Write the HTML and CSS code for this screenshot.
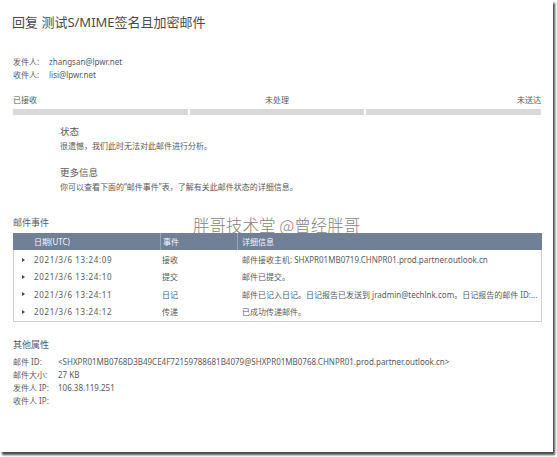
FILE: index.html
```html
<!DOCTYPE html>
<html lang="zh-CN">
<head>
<meta charset="utf-8">
<link rel="stylesheet" href="styles.css">
</head>
<body>
<div class="frame">
  <h1 class="title">回复 测试S/MIME签名且加密邮件</h1>

  <div class="people">
    <div class="prow"><span class="plabel">发件人:</span><span>zhangsan@lpwr.net</span></div>
    <div class="prow"><span class="plabel">收件人:</span><span>lisi@lpwr.net</span></div>
  </div>

  <div class="progress">
    <div class="plabels">
      <span class="pl-left">已接收</span><span class="pl-mid">未处理</span><span class="pl-right">未送达</span>
    </div>
    <div class="bars">
      <div class="bar"></div><div class="bar"></div><div class="bar"></div>
    </div>
  </div>

  <div class="info">
    <div class="iblock">
      <div class="ihead">状态</div>
      <div class="itext">很遗憾，我们此时无法对此邮件进行分析。</div>
    </div>
    <div class="iblock">
      <div class="ihead">更多信息</div>
      <div class="itext">你可以查看下面的“邮件事件”表，了解有关此邮件状态的详细信息。</div>
    </div>
  </div>

  <div class="events">
    <div class="shead">邮件事件</div>
    <div class="watermark">胖哥技术堂 @曾经胖哥</div>
    <div class="table">
      <div class="thead">
        <div class="c1">日期(UTC)</div>
        <div class="c2">事件</div>
        <div class="c3">详细信息</div>
      </div>
      <div class="tbody">
        <div class="trow">
          <div class="c1"><span class="tri"></span><span class="date">2021/3/6 13:24:09</span></div>
          <div class="c2">接收</div>
          <div class="c3">邮件接收主机: SHXPR01MB0719.CHNPR01.prod.partner.outlook.cn</div>
        </div>
        <div class="trow">
          <div class="c1"><span class="tri"></span><span class="date">2021/3/6 13:24:10</span></div>
          <div class="c2">提交</div>
          <div class="c3">邮件已提交。</div>
        </div>
        <div class="trow">
          <div class="c1"><span class="tri"></span><span class="date">2021/3/6 13:24:11</span></div>
          <div class="c2">日记</div>
          <div class="c3">邮件已记入日记。日记报告已发送到 jradmin@techlnk.com。日记报告的邮件 ID:...</div>
        </div>
        <div class="trow">
          <div class="c1"><span class="tri"></span><span class="date">2021/3/6 13:24:12</span></div>
          <div class="c2">传递</div>
          <div class="c3">已成功传递邮件。</div>
        </div>
      </div>
    </div>
  </div>

  <div class="props">
    <div class="shead">其他属性</div>
    <div class="prop"><span class="klabel">邮件 ID:</span><span>&lt;SHXPR01MB0768D3B49CE4F72159788681B4079@SHXPR01MB0768.CHNPR01.prod.partner.outlook.cn&gt;</span></div>
    <div class="prop"><span class="klabel">邮件大小:</span><span>27 KB</span></div>
    <div class="prop"><span class="klabel">发件人 IP:</span><span>106.38.119.251</span></div>
    <div class="prop"><span class="klabel">收件人 IP:</span><span></span></div>
  </div>
</div>
</body>
</html>
```

FILE: styles.css
```css
html, body {
  margin: 0;
  padding: 0;
  background: #ffffff;
}
body {
  width: 557px;
  height: 457px;
  overflow: hidden;
  font-family: "Noto Sans", "Noto Sans CJK SC", sans-serif;
  color: #5a5a5a;
}
.frame {
  width: 553px;
  height: 452px;
  background: #fff;
  box-shadow: 2px 3px 2px rgba(0,0,0,0.7);
  box-sizing: border-box;
  padding: 0 12px 0 13px;
}
.title {
  margin: 0 0 0 -1px;
  padding-top: 12px;
  font-size: 13px;
  font-weight: normal;
  line-height: 20px;
  color: #4a4a4a;
}
.people {
  margin-top: 23px;
  font-size: 8px;
  line-height: 13px;
}
.prow { display: flex; }
.plabel { width: 36px; flex: none; }
.progress {
  margin-top: 12px;
}
.plabels {
  display: grid;
  grid-template-columns: 1fr auto 1fr;
  font-size: 8px;
  line-height: 13px;
  width: 528px;
}
.pl-mid { text-align: center; }
.pl-right { text-align: right; }
.bars {
  display: flex;
  gap: 2px;
  margin-top: 3px;
  width: 528px;
}
.bar {
  flex: 1;
  height: 6px;
  background: #d9d9d9;
}
.info {
  padding-left: 47px;
  margin-top: 10px;
  display: flex;
  flex-direction: column;
  gap: 14px;
}
.ihead {
  font-size: 9.5px;
  line-height: 14px;
}
.itext {
  font-size: 8px;
  line-height: 13px;
}
.events {
  position: relative;
  margin-top: 23px;
}
.shead {
  font-size: 9px;
  line-height: 14px;
}
.watermark {
  position: absolute;
  left: 180px;
  top: -1px;
  font-size: 16.5px;
  line-height: 20px;
  color: #858585;
  font-weight: 300;
  font-family: "Noto Sans CJK SC", sans-serif;
  z-index: 2;
  white-space: nowrap;
}
.table {
  width: 529px;
  margin-top: 3px;
}
.thead {
  display: flex;
  background: #6f8097;
  color: #f4f6f9;
  height: 17px;
  align-items: stretch;
  font-size: 8px;
}
.thead > div {
  display: flex;
  align-items: center;
  box-sizing: border-box;
}
.thead .c1 { padding-left: 21px; }
.thead .c2 { border-left: 1px solid #95a4b8; padding-left: 2px; }
.thead .c3 { border-left: 1px solid #95a4b8; padding-left: 4px; }
.c1 { width: 147px; flex: none; box-sizing: border-box; }
.c2 { width: 77px; flex: none; box-sizing: border-box; }
.c3 { flex: 1; white-space: nowrap; overflow: hidden; }
.tbody {
  border: 1px solid #cfcfcf;
  border-top: none;
  padding: 1px 0 1px;
}
.trow {
  display: flex;
  height: 17.3px;
  align-items: center;
  font-size: 8px;
}
.trow .c1 { display: flex; align-items: center; padding-left: 8px; }
.trow .c2 { padding-left: 1px; }
.trow .c3 { padding-left: 4px; }
.date { letter-spacing: 0.65px; }
.tri {
  width: 0;
  height: 0;
  border-top: 2.5px solid transparent;
  border-bottom: 2.5px solid transparent;
  border-left: 3.5px solid #444;
  margin-right: 9px;
}
.props {
  margin-top: 16px;
}
.props .shead { margin-bottom: 3px; }
.prop {
  display: flex;
  font-size: 8px;
  line-height: 13px;
  white-space: nowrap;
}
.klabel { width: 45px; flex: none; }
```
